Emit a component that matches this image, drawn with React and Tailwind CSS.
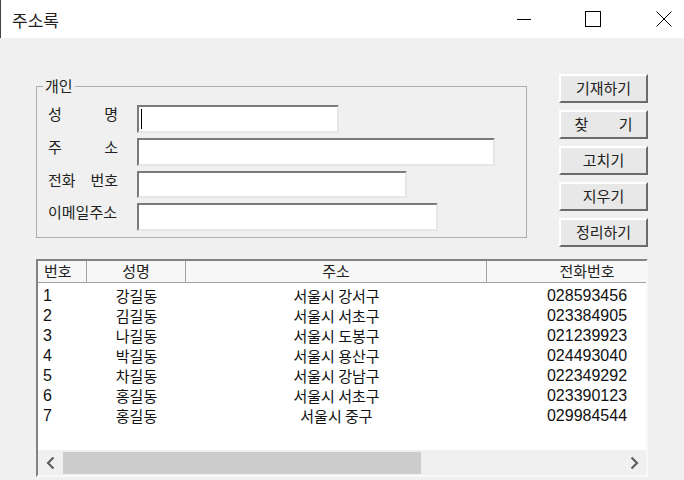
import React from "react";

const rows = [
  { no: "1", name: "강길동", addr: "서울시 강서구", tel: "028593456" },
  { no: "2", name: "김길동", addr: "서울시 서초구", tel: "023384905" },
  { no: "3", name: "나길동", addr: "서울시 도봉구", tel: "021239923" },
  { no: "4", name: "박길동", addr: "서울시 용산구", tel: "024493040" },
  { no: "5", name: "차길동", addr: "서울시 강남구", tel: "022349292" },
  { no: "6", name: "홍길동", addr: "서울시 서초구", tel: "023390123" },
  { no: "7", name: "홍길동", addr: "서울시 중구", tel: "029984544" },
];

const fields = [
  { label: ["성", "명"], w: "w-[202px]", h: "h-[28px]", caret: true },
  { label: ["주", "소"], w: "w-[358px]", h: "h-[28px]" },
  { label: ["전화", "번호"], w: "w-[270px]", h: "h-[27px]" },
  { label: ["이메일주소"], w: "w-[301px]", h: "h-[28px]" },
];

const buttons = [["기재하기"], ["찾", "기"], ["고치기"], ["지우기"], ["정리하기"]];

const font = "font-['Liberation_Sans','Noto_Sans_CJK_KR',sans-serif]";
const kr = "font-['Noto_Sans_CJK_KR',sans-serif]";

export default function App() {
  return (
    <div className={`w-[684px] h-[480px] bg-[#f0f0f0] text-[#111] overflow-hidden ${font}`}>
      {/* title bar */}
      <div className="h-[38px] bg-white border-l border-[#444] flex items-center">
        <span className={`ml-[11px] text-[17px] leading-none ${kr} text-[#222]`}>주소록</span>
        <div className="ml-auto flex items-center h-full">
          <svg width="16" height="16" viewBox="0 0 16 16" className="mr-[53px]">
            <path d="M1 8.5h14" stroke="#000" strokeWidth="1" />
          </svg>
          <svg width="16" height="16" viewBox="0 0 16 16" className="mr-[55px]">
            <rect x="0.5" y="0.5" width="15" height="15" fill="none" stroke="#000" strokeWidth="1" />
          </svg>
          <svg width="16" height="16" viewBox="0 0 16 16" className="mr-[12px]">
            <path d="M0.5 0.5l15 15M15.5 0.5l-15 15" stroke="#000" strokeWidth="1" />
          </svg>
        </div>
      </div>

      <div className="pt-[36px] pl-[36px]">
        <div className="flex items-start h-[171px]">
          {/* group box */}
          <fieldset className="mt-[4px] w-[491px] h-[160px] border border-[#adadad] pl-[6px] pt-[11px]">
            <legend className={`px-[2px] text-[15px] leading-[16px] ${kr} text-[#222]`}>개인</legend>
            <div className="flex flex-col gap-[5px] ml-[5px]">
              {fields.map((f, i) => (
                <div key={i} className="flex items-start">
                  <div className={`w-[70px] mt-[1px] flex justify-between text-[15px] leading-[15px] ${kr} text-[#222]`}>
                    {f.label.map((t) => (
                      <span key={t}>{t}</span>
                    ))}
                  </div>
                  <div
                    className={`ml-[19px] ${f.w} ${f.h} bg-white border-2 border-t-[#7a7a7a] border-l-[#7a7a7a] border-b-[#e6e6e6] border-r-[#e6e6e6] flex items-center`}
                  >
                    {f.caret && <div className="ml-[2px] w-[1px] h-[20px] bg-black" />}
                  </div>
                </div>
              ))}
            </div>
          </fieldset>

          {/* buttons */}
          <div className="ml-[32px] flex flex-col gap-[7px]">
            {buttons.map((b, i) => (
              <button
                key={i}
                className={`w-[89px] h-[29px] bg-[#e8e8e8] border-2 border-t-white border-l-white border-b-[#6b6b6b] border-r-[#6b6b6b] flex items-center justify-center text-[15px] ${kr} text-[#222]`}
              >
                {b.length > 1 ? (
                  <span className="w-[58px] flex justify-between">
                    <span>{b[0]}</span>
                    <span>{b[1]}</span>
                  </span>
                ) : (
                  <span>{b[0]}</span>
                )}
              </button>
            ))}
          </div>
        </div>

        {/* list view */}
        <div className="mt-[14px] w-[612px] h-[218px] bg-white border-2 border-t-[#828282] border-l-[#828282] border-b-[#f8f8f8] border-r-[#f8f8f8] flex flex-col overflow-hidden">
          <div className="flex-1 overflow-hidden">
            <div className="w-[650px]">
              <div className={`flex h-[22px] bg-[#f7f7f7] border-b border-[#a0a0a0] text-[15px] ${kr} text-[#222] leading-[20px]`}>
                <div className="w-[49px] pl-[6px] border-r border-[#a0a0a0]">번호</div>
                <div className="w-[99px] text-center border-r border-[#a0a0a0]">성명</div>
                <div className="w-[301px] text-center border-r border-[#a0a0a0]">주소</div>
                <div className="w-[200px] text-center">전화번호</div>
              </div>
              <div className="pt-[3px]">
                {rows.map((r) => (
                  <div key={r.no} className="flex h-[20px] items-center">
                    <div className="w-[49px] pl-[5px] text-[16px] font-['Liberation_Sans',sans-serif] text-[#111]">{r.no}</div>
                    <div className={`w-[99px] text-center text-[15px] ${kr}`}>{r.name}</div>
                    <div className={`w-[301px] text-center text-[15px] ${kr}`}>{r.addr}</div>
                    <div className="w-[200px] text-center text-[16px] font-['Liberation_Sans',sans-serif] text-[#111]">{r.tel}</div>
                  </div>
                ))}
              </div>
            </div>
          </div>
          {/* horizontal scrollbar */}
          <div className="h-[25px] bg-[#f0f0f0] flex items-center">
            <div className="w-[25px] h-full flex items-center justify-center">
              <svg width="10" height="14" viewBox="0 0 10 14">
                <path d="M7.5 1.5L2 7l5.5 5.5" fill="none" stroke="#606060" strokeWidth="2.2" />
              </svg>
            </div>
            <div className="w-[358px] h-[22px] bg-[#cdcdcd]" />
            <div className="flex-1" />
            <div className="w-[25px] h-full flex items-center justify-center">
              <svg width="10" height="14" viewBox="0 0 10 14">
                <path d="M2.5 1.5L8 7l-5.5 5.5" fill="none" stroke="#606060" strokeWidth="2.2" />
              </svg>
            </div>
          </div>
        </div>
      </div>
    </div>
  );
}
